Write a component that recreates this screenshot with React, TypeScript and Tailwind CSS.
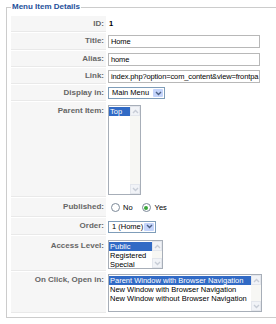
import type { ReactNode } from 'react'

function Chevron({ up, color }: { up?: boolean; color: string }) {
  return (
    <svg width="7" height="5" viewBox="0 0 7 5">
      <path d={up ? 'M1 4 L3.5 1.5 L6 4' : 'M1 1 L3.5 3.5 L6 1'} fill="none" stroke={color} strokeWidth="1.4" />
    </svg>
  )
}

function Row({ label, h, top, children }: { label: string; h: string; top?: string; children: ReactNode }) {
  return (
    <div className={`flex ${h}`}>
      <div
        className={`flex w-[95px] shrink-0 justify-end border-b border-[#e9e9e9] bg-[#f6f6f6] pr-[2px] text-right text-[8px] font-bold text-[#666] ${top ? `items-start ${top}` : 'items-center'}`}
      >
        {label}
      </div>
      <div className={`flex flex-1 pl-[2px] ${top ? `items-start ${top}` : 'items-center'}`}>{children}</div>
    </div>
  )
}

function TextBox({ value }: { value: string }) {
  return (
    <div className="h-[13px] w-[152px] overflow-hidden whitespace-nowrap border border-[#b8b8b8] bg-white pl-[2px] text-[7.5px] leading-[11px] tracking-[-0.12px] text-black">
      {value}
    </div>
  )
}

function Combo({ value, w }: { value: string; w: string }) {
  return (
    <div className={`flex h-[12px] ${w} items-stretch border border-[#7f9db9] bg-white`}>
      <div className="flex-1 pl-[3px] text-[7.5px] leading-[10px] whitespace-nowrap text-black">{value}</div>
      <div className="m-[1px] flex w-[10px] items-center justify-center rounded-[1px] bg-[#c4d4fb]">
        <Chevron color="#4d6185" />
      </div>
    </div>
  )
}

function ListBox({ items, w, h }: { items: string[]; w: string; h: string }) {
  return (
    <div className={`flex ${w} ${h} border border-[#a7aeb8] bg-white`}>
      <div className="flex-1 overflow-hidden pt-[1px]">
        {items.map((it, i) => (
          <div
            key={it}
            className={`h-[9px] whitespace-nowrap px-[1px] text-[7.5px] leading-[9px] ${i === 0 ? 'bg-[#316ac5] text-white' : 'text-black'}`}
          >
            {it}
          </div>
        ))}
      </div>
      <div className="flex w-[10px] flex-col justify-between bg-[#f7f7f4]">
        <div className="flex h-[10px] items-center justify-center border border-[#e3e6ec] bg-[#f1f3f7]">
          <Chevron up color="#c7ccd6" />
        </div>
        <div className="flex h-[10px] items-center justify-center border border-[#e3e6ec] bg-[#f1f3f7]">
          <Chevron color="#c7ccd6" />
        </div>
      </div>
    </div>
  )
}

function Radio({ checked }: { checked?: boolean }) {
  return (
    <div className="flex h-[9px] w-[9px] items-center justify-center rounded-full border border-[#7d8a99] bg-white">
      {checked && <div className="h-[4px] w-[4px] rounded-full bg-[#3aa63a]" />}
    </div>
  )
}

export default function App() {
  return (
    <div className="h-[324px] w-[276px] overflow-hidden bg-white pt-[2px] font-['Liberation_Sans',Arial,sans-serif]">
      <fieldset className="ml-[6px] w-[272px] border border-[#cccccc] px-[4px] pb-[4px]">
        <legend className="px-[1px] text-[8px] font-bold leading-[10px] text-[#24509a]">Menu Item Details</legend>

        <div className="flex flex-col gap-[1px] pt-[4px]">
          <Row label="ID:" h="h-[16px]">
            <span className="pl-[1px] text-[7.5px] font-bold text-black">1</span>
          </Row>
          <Row label="Title:" h="h-[17px]">
            <TextBox value="Home" />
          </Row>
          <Row label="Alias:" h="h-[16px]">
            <TextBox value="home" />
          </Row>
          <Row label="Link:" h="h-[16px]">
            <TextBox value="index.php?option=com_content&view=frontpa" />
          </Row>
          <Row label="Display in:" h="h-[16px]">
            <Combo value="Main Menu" w="w-[57px]" />
          </Row>
          <Row label="Parent Item:" h="h-[95px]" top="pt-[3px]">
            <ListBox items={['Top']} w="w-[33px]" h="h-[90px]" />
          </Row>
          <Row label="Published:" h="h-[19px]">
            <div className="flex items-center text-[7.5px] text-black">
              <span className="ml-[3px]"><Radio /></span>
              <span className="ml-[3px]">No</span>
              <span className="ml-[9px]"><Radio checked /></span>
              <span className="ml-[4px]">Yes</span>
            </div>
          </Row>
          <Row label="Order:" h="h-[17px]">
            <Combo value="1 (Home)" w="w-[48px]" />
          </Row>
          <Row label="Access Level:" h="h-[35px]" top="pt-[4px]">
            <ListBox items={['Public', 'Registered', 'Special']} w="w-[55px]" h="h-[29px]" />
          </Row>
          <Row label="On Click, Open in:" h="h-[41px]" top="pt-[2px]">
            <ListBox
              items={[
                'Parent Window with Browser Navigation',
                'New Window with Browser Navigation',
                'New Window without Browser Navigation',
              ]}
              w="w-[154px]"
              h="h-[38px]"
            />
          </Row>
        </div>
      </fieldset>
    </div>
  )
}
